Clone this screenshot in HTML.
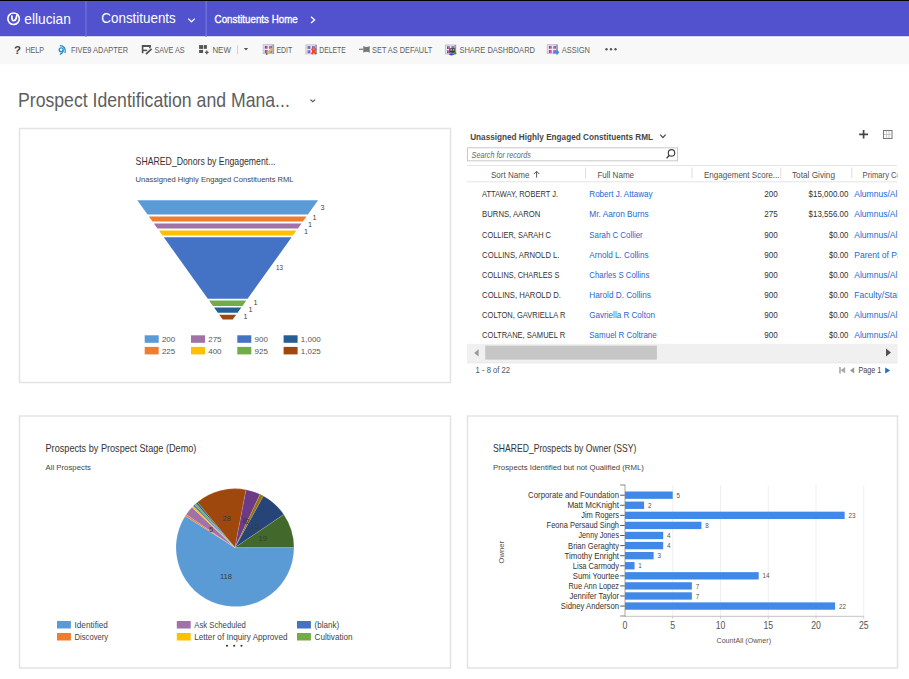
<!DOCTYPE html>
<html><head><meta charset="utf-8"><style>
html,body{margin:0;padding:0;background:#fff;width:909px;height:679px;overflow:hidden}
svg{display:block}
text{font-family:"Liberation Sans", sans-serif}
</style></head><body>
<svg width="909" height="679" viewBox="0 0 909 679">
<rect x="0" y="0" width="909" height="1" fill="#000"/>
<rect x="0" y="1" width="909" height="35.5" fill="#5252CE"/>
<rect x="0" y="36.5" width="909" height="1.3" fill="#FFFFFF"/>
<rect x="0" y="37.8" width="909" height="26.6" fill="#F8F8F8"/>
<circle cx="13.6" cy="18.75" r="5.75" fill="none" stroke="#fff" stroke-width="1.65"/>
<path d="M11.9 16.1 C11.6 19.4 12.5 20.7 13.8 20.7 C15.2 20.7 15.9 19.5 16.3 17.8 L17.2 14.6" fill="none" stroke="#fff" stroke-width="1.8" stroke-linecap="round"/>
<text x="24.3" y="23.6" font-size="15" fill="#fff" textLength="46.5" lengthAdjust="spacingAndGlyphs">ellucian</text>
<line x1="86" y1="1" x2="86" y2="36.5" stroke="#6A6BD6" stroke-width="1.7"/>
<text x="101.3" y="23.1" font-size="14.3" fill="#fff" textLength="74.5" lengthAdjust="spacingAndGlyphs">Constituents</text>
<path d="M188.2 18.6 L191.5 21.8 L194.8 18.6" fill="none" stroke="#fff" stroke-width="1.2"/>
<line x1="206.2" y1="1" x2="206.2" y2="36.5" stroke="#6A6BD6" stroke-width="1.7"/>
<text x="214.6" y="22.8" font-size="11.8" fill="#fff" textLength="83.2" lengthAdjust="spacingAndGlyphs" stroke="#fff" stroke-width="0.35">Constituents Home</text>
<path d="M311 16.8 L314.6 19.9 L311 23" fill="none" stroke="#fff" stroke-width="1.3"/>
<text x="14" y="53.8" font-size="11.5" fill="#444" textLength="7" lengthAdjust="spacingAndGlyphs" font-weight="bold">?</text>
<text x="25.5" y="53.4" font-size="8.9" fill="#5e5e5e" textLength="18.5" lengthAdjust="spacingAndGlyphs">HELP</text>
<text x="70.9" y="53.4" font-size="8.9" fill="#5e5e5e" textLength="57.2" lengthAdjust="spacingAndGlyphs">FIVE9 ADAPTER</text>
<text x="154.5" y="53.4" font-size="8.9" fill="#5e5e5e" textLength="30.2" lengthAdjust="spacingAndGlyphs">SAVE AS</text>
<text x="212.4" y="53.4" font-size="8.9" fill="#5e5e5e" textLength="18.5" lengthAdjust="spacingAndGlyphs">NEW</text>
<text x="276.4" y="53.4" font-size="8.9" fill="#5e5e5e" textLength="15.8" lengthAdjust="spacingAndGlyphs">EDIT</text>
<text x="319.3" y="53.4" font-size="8.9" fill="#5e5e5e" textLength="26.4" lengthAdjust="spacingAndGlyphs">DELETE</text>
<text x="372.1" y="53.4" font-size="8.9" fill="#5e5e5e" textLength="60.1" lengthAdjust="spacingAndGlyphs">SET AS DEFAULT</text>
<text x="459.4" y="53.4" font-size="8.9" fill="#5e5e5e" textLength="75.6" lengthAdjust="spacingAndGlyphs">SHARE DASHBOARD</text>
<text x="561.7" y="53.4" font-size="8.9" fill="#5e5e5e" textLength="28.3" lengthAdjust="spacingAndGlyphs">ASSIGN</text>
<circle cx="606.5" cy="49.3" r="1.2" fill="#555"/>
<circle cx="611" cy="49.3" r="1.2" fill="#555"/>
<circle cx="615.5" cy="49.3" r="1.2" fill="#555"/>
<circle cx="61.2" cy="49.8" r="1.95" fill="none" stroke="#2F8FCB" stroke-width="1.45"/>
<path d="M63.1 50.2 C62.9 52.3 61.6 53.8 59.8 54.5" fill="none" stroke="#2F8FCB" stroke-width="1.45"/>
<path d="M60.3 45.6 C63.6 45.6 65.8 48.4 65.2 52.5" fill="none" stroke="#2F8FCB" stroke-width="1.35" stroke-linecap="round"/>
<path d="M142.6 53.2 V45.7 H149.9 V48.2" fill="none" stroke="#4f4f4f" stroke-width="1.6"/>
<rect x="142" y="45" width="8.7" height="1.9" fill="#4f4f4f"/>
<path d="M142.2 50.4 H147.2" fill="none" stroke="#4f4f4f" stroke-width="1.5"/>
<path d="M146 54.2 L151.6 48.8" fill="none" stroke="#4f4f4f" stroke-width="1.7"/>
<rect x="199.1" y="45.1" width="4" height="3.8" fill="#555"/>
<rect x="203.8" y="45.1" width="3.1" height="3.7" fill="#555"/>
<rect x="199.1" y="49.9" width="4" height="3.1" fill="#555"/>
<path d="M206.8 50.6 v3.6 M205 52.4 h3.6" fill="none" stroke="#555" stroke-width="1.3"/>
<line x1="237.6" y1="45.5" x2="237.6" y2="54" stroke="#cfcfcf" stroke-width="1"/>
<path d="M243.8 48.1 h4.4 l-2.2 2.3 z" fill="#555"/>
<rect x="263.1" y="44.7" width="10.7" height="9" fill="#E4E8F0" stroke="#AAB2C2" stroke-width="0.7"/>
<rect x="272.5" y="44.7" width="1.3" height="9" fill="#8C94A6"/>
<rect x="264.8" y="45.9" width="1.2" height="2.8" fill="#3D5FD6"/>
<rect x="266.0" y="45.9" width="1.6" height="2.8" fill="#D2458E"/>
<rect x="269.3" y="45.9" width="1.2" height="2.8" fill="#3D5FD6"/>
<rect x="270.5" y="45.9" width="1.6" height="2.8" fill="#D2458E"/>
<rect x="264.8" y="50.1" width="1.2" height="2.8" fill="#3D5FD6"/>
<rect x="266.0" y="50.1" width="1.6" height="2.8" fill="#D2458E"/>
<rect x="269.3" y="50.1" width="1.2" height="2.8" fill="#3D5FD6"/>
<rect x="270.5" y="50.1" width="1.6" height="2.8" fill="#D2458E"/>
<path d="M266.6 54 L272.6 48.6" fill="none" stroke="#D8C040" stroke-width="2.2"/>
<path d="M266 54.6 L267.2 53.4" fill="none" stroke="#555" stroke-width="1.4"/>
<rect x="305.9" y="44.9" width="10.7" height="9" fill="#E4E8F0" stroke="#AAB2C2" stroke-width="0.7"/>
<rect x="315.29999999999995" y="44.9" width="1.3" height="9" fill="#8C94A6"/>
<rect x="307.6" y="46.1" width="1.2" height="2.8" fill="#3D5FD6"/>
<rect x="308.8" y="46.1" width="1.6" height="2.8" fill="#D2458E"/>
<rect x="312.1" y="46.1" width="1.2" height="2.8" fill="#3D5FD6"/>
<rect x="313.3" y="46.1" width="1.6" height="2.8" fill="#D2458E"/>
<rect x="307.6" y="50.3" width="1.2" height="2.8" fill="#3D5FD6"/>
<rect x="308.8" y="50.3" width="1.6" height="2.8" fill="#D2458E"/>
<rect x="312.1" y="50.3" width="1.2" height="2.8" fill="#3D5FD6"/>
<rect x="313.3" y="50.3" width="1.6" height="2.8" fill="#D2458E"/>
<path d="M311.6 48.6 L316.2 54.2 M316.2 48.6 L311.6 54.2" fill="none" stroke="#F04A22" stroke-width="1.9"/>
<path d="M359 49.3 H363.5" fill="none" stroke="#777" stroke-width="1.2"/>
<path d="M363.3 46 Q366.5 47.8 369.7 46 V52.7 Q366.5 50.9 363.3 52.7 Z" fill="#777"/>
<rect x="445.3" y="45" width="10.6" height="9" fill="#E4E8F0" stroke="#AAB2C2" stroke-width="0.7"/>
<rect x="454.6" y="45" width="1.3" height="9" fill="#8C94A6"/>
<rect x="447.0" y="46.2" width="1.2" height="2.8" fill="#3D5FD6"/>
<rect x="448.2" y="46.2" width="1.6" height="2.8" fill="#D2458E"/>
<rect x="451.5" y="46.2" width="1.2" height="2.8" fill="#3D5FD6"/>
<rect x="452.7" y="46.2" width="1.6" height="2.8" fill="#D2458E"/>
<rect x="447.0" y="50.4" width="1.2" height="2.8" fill="#3D5FD6"/>
<rect x="448.2" y="50.4" width="1.6" height="2.8" fill="#D2458E"/>
<rect x="451.5" y="50.4" width="1.2" height="2.8" fill="#3D5FD6"/>
<rect x="452.7" y="50.4" width="1.6" height="2.8" fill="#D2458E"/>
<rect x="449.3" y="48.3" width="5.8" height="4.3" fill="#3a3a3a"/>
<rect x="450.3" y="49.1" width="1.6" height="1.6" fill="#bbb"/>
<rect x="452.8" y="49.1" width="1.6" height="1.6" fill="#bbb"/>
<ellipse cx="451.5" cy="54.3" rx="2.5" ry="1.1" fill="#3548D8"/>
<circle cx="455" cy="53.2" r="1.3" fill="#3A9A3A"/>
<rect x="547.2" y="44.7" width="10.4" height="9" fill="#E4E8F0" stroke="#AAB2C2" stroke-width="0.7"/>
<rect x="556.3000000000001" y="44.7" width="1.3" height="9" fill="#8C94A6"/>
<rect x="548.9" y="45.9" width="1.2" height="2.8" fill="#3D5FD6"/>
<rect x="550.1" y="45.9" width="1.6" height="2.8" fill="#D2458E"/>
<rect x="553.4" y="45.9" width="1.2" height="2.8" fill="#3D5FD6"/>
<rect x="554.6" y="45.9" width="1.6" height="2.8" fill="#D2458E"/>
<rect x="548.9" y="50.1" width="1.2" height="2.8" fill="#3D5FD6"/>
<rect x="550.1" y="50.1" width="1.6" height="2.8" fill="#D2458E"/>
<rect x="553.4" y="50.1" width="1.2" height="2.8" fill="#3D5FD6"/>
<rect x="554.6" y="50.1" width="1.6" height="2.8" fill="#D2458E"/>
<path d="M553.3 51.2 H556.6 V49.2 L559.4 52.3 L556.6 55.4 V53.4 H553.3 Z" fill="#4C86E6"/>
<text x="18" y="106.6" font-size="20.3" fill="#5e5e5e" textLength="271.8" lengthAdjust="spacingAndGlyphs">Prospect Identification and Mana...</text>
<path d="M310.4 99.6 L312.8 101.8 L315.2 99.6" fill="none" stroke="#555" stroke-width="1.2"/>
<rect x="19.5" y="128.5" width="431" height="254" fill="none" stroke="#E3E3E3" stroke-width="1.5"/>
<rect x="19.5" y="416" width="431" height="252" fill="none" stroke="#E3E3E3" stroke-width="1.5"/>
<rect x="467.5" y="416" width="430" height="252" fill="none" stroke="#E3E3E3" stroke-width="1.5"/>
<text x="135.6" y="164.6" font-size="10.2" fill="#333" textLength="139.9" lengthAdjust="spacingAndGlyphs">SHARED_Donors by Engagement...</text>
<text x="135.6" y="182.2" font-size="7.6" fill="#444" textLength="158" lengthAdjust="spacingAndGlyphs">Unassigned Highly Engaged Constituents RML</text>
<path d="M137.30 200.3 L318.10 200.3 L307.86 214.6 L147.54 214.6 Z" fill="#5B9BD5"/>
<path d="M148.83 216.4 L306.57 216.4 L302.85 221.6 L152.55 221.6 Z" fill="#ED7D31"/>
<path d="M153.84 223.4 L301.56 223.4 L297.91 228.5 L157.49 228.5 Z" fill="#A072A8"/>
<path d="M158.99 230.6 L296.41 230.6 L292.83 235.6 L162.57 235.6 Z" fill="#FFC000"/>
<path d="M163.79 237.3 L291.61 237.3 L247.57 298.8 L207.83 298.8 Z" fill="#4472C4"/>
<path d="M209.11 300.6 L246.29 300.6 L242.49 305.9 L212.91 305.9 Z" fill="#70AD47"/>
<path d="M214.06 307.5 L241.34 307.5 L237.55 312.8 L217.85 312.8 Z" fill="#255E91"/>
<path d="M219.21 314.7 L236.19 314.7 L232.68 319.6 L222.72 319.6 Z" fill="#9E480E"/>
<text x="320.5" y="209.8" font-size="7.2" fill="#404040">3</text>
<text x="312.5" y="220.3" font-size="7.2" fill="#404040">1</text>
<text x="308" y="227.3" font-size="7.2" fill="#404040">1</text>
<text x="304" y="234.1" font-size="7.2" fill="#404040">1</text>
<text x="276" y="269.8" font-size="7.2" fill="#404040" textLength="7" lengthAdjust="spacingAndGlyphs">13</text>
<text x="253.5" y="304.8" font-size="7.2" fill="#404040">1</text>
<text x="248.5" y="311.8" font-size="7.2" fill="#404040">1</text>
<text x="243.5" y="318.8" font-size="7.2" fill="#404040">1</text>
<rect x="144.7" y="335.3" width="14" height="7.5" fill="#5B9BD5"/>
<text x="161.9" y="341.9" font-size="8" fill="#555">200</text>
<rect x="144.7" y="346.90000000000003" width="14" height="7.5" fill="#ED7D31"/>
<text x="161.9" y="353.5" font-size="8" fill="#555">225</text>
<rect x="191.0" y="335.3" width="14" height="7.5" fill="#A072A8"/>
<text x="208.2" y="341.9" font-size="8" fill="#555">275</text>
<rect x="191.0" y="346.90000000000003" width="14" height="7.5" fill="#FFC000"/>
<text x="208.2" y="353.5" font-size="8" fill="#555">400</text>
<rect x="237.3" y="335.3" width="14" height="7.5" fill="#4472C4"/>
<text x="254.5" y="341.9" font-size="8" fill="#555">900</text>
<rect x="237.3" y="346.90000000000003" width="14" height="7.5" fill="#70AD47"/>
<text x="254.5" y="353.5" font-size="8" fill="#555">925</text>
<rect x="283.6" y="335.3" width="14" height="7.5" fill="#255E91"/>
<text x="300.8" y="341.9" font-size="8" fill="#555">1,000</text>
<rect x="283.6" y="346.90000000000003" width="14" height="7.5" fill="#9E480E"/>
<text x="300.8" y="353.5" font-size="8" fill="#555">1,025</text>
<text x="470.2" y="140.4" font-size="9.2" fill="#474747" textLength="182.8" lengthAdjust="spacingAndGlyphs" font-weight="bold">Unassigned Highly Engaged Constituents RML</text>
<path d="M660.2 134.7 L662.9 137.6 L665.6 134.7" fill="none" stroke="#444" stroke-width="1.2"/>
<path d="M863.6 130 v8.6 M859.2 134.3 h8.8" fill="none" stroke="#444" stroke-width="1.7"/>
<rect x="883.5" y="130.5" width="8.5" height="8" fill="none" stroke="#777" stroke-width="1"/>
<path d="M886.5 131 v7 M889 131 v7 M884 134.5 h7.5" fill="none" stroke="#bbb" stroke-width="0.8"/>
<rect x="467.5" y="147.8" width="210" height="13" fill="#fff" stroke="#C8C8C8" stroke-width="1"/>
<text x="471.6" y="158.1" font-size="8.3" fill="#666" textLength="59.2" lengthAdjust="spacingAndGlyphs" font-style="italic">Search for records</text>
<circle cx="671.5" cy="152.9" r="3.2" fill="none" stroke="#444" stroke-width="1.2"/>
<path d="M669.3 155.3 L666.6 158.2" fill="none" stroke="#444" stroke-width="1.4"/>
<rect x="467" y="165" width="430" height="1" fill="#E4E4E4"/>
<rect x="467" y="181.3" width="430" height="1" fill="#E4E4E4"/>
<rect x="585.1" y="167.6" width="1" height="10.6" fill="#DDDDDD"/>
<rect x="691.5" y="167.6" width="1" height="10.6" fill="#DDDDDD"/>
<rect x="780.3" y="167.6" width="1" height="10.6" fill="#DDDDDD"/>
<rect x="851.3" y="167.6" width="1" height="10.6" fill="#DDDDDD"/>
<text x="491" y="177.5" font-size="8.9" fill="#505050" textLength="38.5" lengthAdjust="spacingAndGlyphs">Sort Name</text>
<path d="M536.6 177.6 v-6.2 M533.8 174.1 L536.6 171.3 L539.4 174.1" fill="none" stroke="#555" stroke-width="1"/>
<text x="597.4" y="177.5" font-size="8.9" fill="#505050" textLength="36.7" lengthAdjust="spacingAndGlyphs">Full Name</text>
<text x="704" y="177.5" font-size="8.9" fill="#505050" textLength="75.5" lengthAdjust="spacingAndGlyphs">Engagement Score...</text>
<text x="792" y="177.5" font-size="8.9" fill="#505050" textLength="43" lengthAdjust="spacingAndGlyphs">Total Giving</text>
<clipPath id="gc"><rect x="467" y="160" width="430.5" height="220"/></clipPath>
<g clip-path="url(#gc)">
<text x="862.6" y="177.5" font-size="8.9" fill="#505050" textLength="67.2" lengthAdjust="spacingAndGlyphs">Primary Constituent</text>
<text x="482.1" y="197.2" font-size="9.9" fill="#333" textLength="75.9" lengthAdjust="spacingAndGlyphs">ATTAWAY, ROBERT J.</text>
<text x="589.3" y="197.2" font-size="9.9" fill="#2368D2" textLength="63.3" lengthAdjust="spacingAndGlyphs">Robert J. Attaway</text>
<text x="764.2" y="197.2" font-size="9.9" fill="#333" textLength="13.5" lengthAdjust="spacingAndGlyphs">200</text>
<text x="808.6" y="197.2" font-size="9.9" fill="#333" textLength="39.8" lengthAdjust="spacingAndGlyphs">$15,000.00</text>
<text x="854.3" y="197.2" font-size="9.9" fill="#2368D2" textLength="64.4" lengthAdjust="spacingAndGlyphs">Alumnus/Alumna</text>
<text x="482.1" y="217.37" font-size="9.9" fill="#333" textLength="58.3" lengthAdjust="spacingAndGlyphs">BURNS, AARON</text>
<text x="589.3" y="217.37" font-size="9.9" fill="#2368D2" textLength="59.4" lengthAdjust="spacingAndGlyphs">Mr. Aaron Burns</text>
<text x="764.2" y="217.37" font-size="9.9" fill="#333" textLength="13.5" lengthAdjust="spacingAndGlyphs">275</text>
<text x="808.6" y="217.37" font-size="9.9" fill="#333" textLength="39.8" lengthAdjust="spacingAndGlyphs">$13,556.00</text>
<text x="854.3" y="217.37" font-size="9.9" fill="#2368D2" textLength="64.4" lengthAdjust="spacingAndGlyphs">Alumnus/Alumna</text>
<text x="482.1" y="237.54" font-size="9.9" fill="#333" textLength="68.9" lengthAdjust="spacingAndGlyphs">COLLIER, SARAH C</text>
<text x="589.3" y="237.54" font-size="9.9" fill="#2368D2" textLength="53.4" lengthAdjust="spacingAndGlyphs">Sarah C Collier</text>
<text x="764.2" y="237.54" font-size="9.9" fill="#333" textLength="13.5" lengthAdjust="spacingAndGlyphs">900</text>
<text x="829.0" y="237.54" font-size="9.9" fill="#333" textLength="19.4" lengthAdjust="spacingAndGlyphs">$0.00</text>
<text x="854.3" y="237.54" font-size="9.9" fill="#2368D2" textLength="64.4" lengthAdjust="spacingAndGlyphs">Alumnus/Alumna</text>
<text x="482.1" y="257.71" font-size="9.9" fill="#333" textLength="77.4" lengthAdjust="spacingAndGlyphs">COLLINS, ARNOLD L.</text>
<text x="589.3" y="257.71" font-size="9.9" fill="#2368D2" textLength="59.2" lengthAdjust="spacingAndGlyphs">Arnold L. Collins</text>
<text x="764.2" y="257.71" font-size="9.9" fill="#333" textLength="13.5" lengthAdjust="spacingAndGlyphs">900</text>
<text x="829.0" y="257.71" font-size="9.9" fill="#333" textLength="19.4" lengthAdjust="spacingAndGlyphs">$0.00</text>
<text x="854.3" y="257.71" font-size="9.9" fill="#2368D2" textLength="54.0" lengthAdjust="spacingAndGlyphs">Parent of Past</text>
<text x="482.1" y="277.88" font-size="9.9" fill="#333" textLength="77.4" lengthAdjust="spacingAndGlyphs">COLLINS, CHARLES S</text>
<text x="589.3" y="277.88" font-size="9.9" fill="#2368D2" textLength="60" lengthAdjust="spacingAndGlyphs">Charles S Collins</text>
<text x="764.2" y="277.88" font-size="9.9" fill="#333" textLength="13.5" lengthAdjust="spacingAndGlyphs">900</text>
<text x="829.0" y="277.88" font-size="9.9" fill="#333" textLength="19.4" lengthAdjust="spacingAndGlyphs">$0.00</text>
<text x="854.3" y="277.88" font-size="9.9" fill="#2368D2" textLength="64.4" lengthAdjust="spacingAndGlyphs">Alumnus/Alumna</text>
<text x="482.1" y="298.05" font-size="9.9" fill="#333" textLength="78.9" lengthAdjust="spacingAndGlyphs">COLLINS, HAROLD D.</text>
<text x="589.3" y="298.05" font-size="9.9" fill="#2368D2" textLength="61.5" lengthAdjust="spacingAndGlyphs">Harold D. Collins</text>
<text x="764.2" y="298.05" font-size="9.9" fill="#333" textLength="13.5" lengthAdjust="spacingAndGlyphs">900</text>
<text x="829.0" y="298.05" font-size="9.9" fill="#333" textLength="19.4" lengthAdjust="spacingAndGlyphs">$0.00</text>
<text x="854.3" y="298.05" font-size="9.9" fill="#2368D2" textLength="47.2" lengthAdjust="spacingAndGlyphs">Faculty/Staff</text>
<text x="482.1" y="318.22" font-size="9.9" fill="#333" textLength="83.3" lengthAdjust="spacingAndGlyphs">COLTON, GAVRIELLA R</text>
<text x="589.3" y="318.22" font-size="9.9" fill="#2368D2" textLength="65.6" lengthAdjust="spacingAndGlyphs">Gavriella R Colton</text>
<text x="764.2" y="318.22" font-size="9.9" fill="#333" textLength="13.5" lengthAdjust="spacingAndGlyphs">900</text>
<text x="829.0" y="318.22" font-size="9.9" fill="#333" textLength="19.4" lengthAdjust="spacingAndGlyphs">$0.00</text>
<text x="854.3" y="318.22" font-size="9.9" fill="#2368D2" textLength="64.4" lengthAdjust="spacingAndGlyphs">Alumnus/Alumna</text>
<text x="482.1" y="338.39" font-size="9.9" fill="#333" textLength="83" lengthAdjust="spacingAndGlyphs">COLTRANE, SAMUEL R</text>
<text x="589.3" y="338.39" font-size="9.9" fill="#2368D2" textLength="67.4" lengthAdjust="spacingAndGlyphs">Samuel R Coltrane</text>
<text x="764.2" y="338.39" font-size="9.9" fill="#333" textLength="13.5" lengthAdjust="spacingAndGlyphs">900</text>
<text x="829.0" y="338.39" font-size="9.9" fill="#333" textLength="19.4" lengthAdjust="spacingAndGlyphs">$0.00</text>
<text x="854.3" y="338.39" font-size="9.9" fill="#2368D2" textLength="64.4" lengthAdjust="spacingAndGlyphs">Alumnus/Alumna</text>
</g>
<rect x="467" y="343.8" width="430.5" height="18.5" fill="#F0F0F0"/>
<rect x="467" y="362.3" width="430.5" height="1" fill="#E4E4E4"/>
<rect x="485.2" y="345.6" width="171.7" height="14" fill="#C6C6C6"/>
<path d="M478.6 349.3 L474.2 353 L478.6 356.6 Z" fill="#9A9A9A"/>
<path d="M886 348.6 L891 352.6 L886 356.6 Z" fill="#505050"/>
<text x="475.6" y="372.8" font-size="8.9" fill="#555" textLength="34.5" lengthAdjust="spacingAndGlyphs">1 - 8 of 22</text>
<path d="M840 367 v6.6" fill="none" stroke="#a8a8a8" stroke-width="1.6"/>
<path d="M845.2 367 L840.6 370.3 L845.2 373.6 Z" fill="#a8a8a8"/>
<path d="M854.2 367.2 L850 370.4 L854.2 373.6 Z" fill="#999"/>
<text x="858.4" y="372.8" font-size="8.9" fill="#444" textLength="22.9" lengthAdjust="spacingAndGlyphs">Page 1</text>
<path d="M885.2 367.4 L890.2 370.5 L885.2 373.6 Z" fill="#1E6FC8"/>
<text x="45.5" y="452.3" font-size="10.2" fill="#333" textLength="150.9" lengthAdjust="spacingAndGlyphs">Prospects by Prospect Stage (Demo)</text>
<text x="45.5" y="469.8" font-size="7.6" fill="#444" textLength="45.5" lengthAdjust="spacingAndGlyphs">All Prospects</text>
<path d="M235 547.6 L294.00 547.60 A59 59 0 1 1 185.18 515.99 Z" fill="#5B9BD5" stroke="#fff" stroke-width="0.2" stroke-opacity="0.7"/>
<path d="M235 547.6 L185.18 515.99 A59 59 0 0 1 186.20 514.44 Z" fill="#ED7D31" stroke="#fff" stroke-width="0.2" stroke-opacity="0.7"/>
<path d="M235 547.6 L186.20 514.44 A59 59 0 0 1 191.99 507.21 Z" fill="#A072A8" stroke="#fff" stroke-width="0.2" stroke-opacity="0.7"/>
<path d="M235 547.6 L191.99 507.21 A59 59 0 0 1 193.28 505.88 Z" fill="#FFC000" stroke="#fff" stroke-width="0.2" stroke-opacity="0.7"/>
<path d="M235 547.6 L193.28 505.88 A59 59 0 0 1 194.61 504.59 Z" fill="#4472C4" stroke="#fff" stroke-width="0.2" stroke-opacity="0.7"/>
<path d="M235 547.6 L194.61 504.59 A59 59 0 0 1 195.98 503.34 Z" fill="#70AD47" stroke="#fff" stroke-width="0.2" stroke-opacity="0.7"/>
<path d="M235 547.6 L195.98 503.34 A59 59 0 0 1 197.39 502.14 Z" fill="#255E91" stroke="#fff" stroke-width="0.2" stroke-opacity="0.7"/>
<path d="M235 547.6 L197.39 502.14 A59 59 0 0 1 246.06 489.65 Z" fill="#9E480E" stroke="#fff" stroke-width="0.2" stroke-opacity="0.7"/>
<path d="M235 547.6 L246.06 489.65 A59 59 0 0 1 260.12 494.22 Z" fill="#6C3A87" stroke="#fff" stroke-width="0.2" stroke-opacity="0.7"/>
<path d="M235 547.6 L260.12 494.22 A59 59 0 0 1 263.42 495.90 Z" fill="#997300" stroke="#fff" stroke-width="0.2" stroke-opacity="0.7"/>
<path d="M235 547.6 L263.42 495.90 A59 59 0 0 1 283.80 514.44 Z" fill="#264478" stroke="#fff" stroke-width="0.2" stroke-opacity="0.7"/>
<path d="M235 547.6 L283.80 514.44 A59 59 0 0 1 294.00 547.60 Z" fill="#43682B" stroke="#fff" stroke-width="0.2" stroke-opacity="0.7"/>
<text x="220" y="579" font-size="7.5" fill="#3a3a3a">118</text>
<text x="222.5" y="521.3" font-size="7.5" fill="#3a3a3a">28</text>
<text x="242.5" y="522.7" font-size="7.5" fill="#3a3a3a">8</text>
<text x="250.8" y="528.5" font-size="7.5" fill="#3a3a3a">15</text>
<text x="245.8" y="524" font-size="7" fill="#3a3a3a">2</text>
<text x="258.5" y="541.4" font-size="7.5" fill="#3a3a3a">19</text>
<text x="209" y="531.5" font-size="7.5" fill="#3a3a3a">5</text>
<rect x="57" y="621.0" width="13.9" height="7.5" fill="#5B9BD5"/>
<text x="74.5" y="627.9" font-size="8.2" fill="#444" textLength="33.4" lengthAdjust="spacingAndGlyphs">Identified</text>
<rect x="57" y="633.0" width="13.9" height="7.5" fill="#ED7D31"/>
<text x="74.5" y="639.9" font-size="8.2" fill="#444" textLength="33.7" lengthAdjust="spacingAndGlyphs">Discovery</text>
<rect x="176.8" y="621.0" width="13.9" height="7.5" fill="#A072A8"/>
<text x="194.3" y="627.9" font-size="8.2" fill="#444" textLength="51.5" lengthAdjust="spacingAndGlyphs">Ask Scheduled</text>
<rect x="176.8" y="633.0" width="13.9" height="7.5" fill="#FFC000"/>
<text x="194.3" y="639.9" font-size="8.2" fill="#444" textLength="93.2" lengthAdjust="spacingAndGlyphs">Letter of Inquiry Approved</text>
<rect x="297" y="621.0" width="13.9" height="7.5" fill="#4472C4"/>
<text x="314.5" y="627.9" font-size="8.2" fill="#444" textLength="24.7" lengthAdjust="spacingAndGlyphs">(blank)</text>
<rect x="297" y="633.0" width="13.9" height="7.5" fill="#70AD47"/>
<text x="314.5" y="639.9" font-size="8.2" fill="#444" textLength="38.1" lengthAdjust="spacingAndGlyphs">Cultivation</text>
<circle cx="227" cy="645.8" r="1.05" fill="#333"/>
<circle cx="234.2" cy="645.8" r="1.05" fill="#333"/>
<circle cx="241.5" cy="645.8" r="1.05" fill="#333"/>
<text x="493.1" y="451.6" font-size="10.2" fill="#333" textLength="143.3" lengthAdjust="spacingAndGlyphs">SHARED_Prospects by Owner (SSY)</text>
<text x="493.1" y="469.6" font-size="7.6" fill="#444" textLength="150.7" lengthAdjust="spacingAndGlyphs">Prospects Identified but not Qualified (RML)</text>
<rect x="672.25" y="485" width="1" height="131" fill="#EFEFEF"/>
<rect x="720.0" y="485" width="1" height="131" fill="#EFEFEF"/>
<rect x="767.75" y="485" width="1" height="131" fill="#EFEFEF"/>
<rect x="815.5" y="485" width="1" height="131" fill="#EFEFEF"/>
<rect x="863.25" y="485" width="1" height="131" fill="#EFEFEF"/>
<rect x="625" y="615.8" width="239" height="1.1" fill="#C8C8CE"/>
<rect x="672.25" y="616" width="1" height="2.6" fill="#C8C8CE"/>
<rect x="720.0" y="616" width="1" height="2.6" fill="#C8C8CE"/>
<rect x="767.75" y="616" width="1" height="2.6" fill="#C8C8CE"/>
<rect x="815.5" y="616" width="1" height="2.6" fill="#C8C8CE"/>
<rect x="863.25" y="616" width="1" height="2.6" fill="#C8C8CE"/>
<rect x="624.5" y="485" width="1" height="131.5" fill="#A8A8A8"/>
<rect x="620.2" y="484.5" width="5" height="1" fill="#888"/>
<rect x="620.2" y="615.5" width="5" height="1" fill="#888"/>
<rect x="625" y="491.5" width="47.75" height="7.35" fill="#4189E8"/>
<rect x="620.2" y="494.7" width="4.5" height="1" fill="#555"/>
<text x="528.1" y="498.1" font-size="8.2" fill="#333" textLength="90.9" lengthAdjust="spacingAndGlyphs">Corporate and Foundation</text>
<text x="676.55" y="497.8" font-size="6.8" fill="#555" textLength="3.5" lengthAdjust="spacingAndGlyphs">5</text>
<rect x="625" y="501.58" width="19.1" height="7.35" fill="#4189E8"/>
<rect x="620.2" y="504.78" width="4.5" height="1" fill="#555"/>
<text x="567.4" y="508.18" font-size="8.2" fill="#333" textLength="51.6" lengthAdjust="spacingAndGlyphs">Matt McKnight</text>
<text x="647.9" y="507.88" font-size="6.8" fill="#555" textLength="3.5" lengthAdjust="spacingAndGlyphs">2</text>
<rect x="625" y="511.66" width="219.65" height="7.35" fill="#4189E8"/>
<rect x="620.2" y="514.86" width="4.5" height="1" fill="#555"/>
<text x="581.2" y="518.26" font-size="8.2" fill="#333" textLength="37.8" lengthAdjust="spacingAndGlyphs">Jim Rogers</text>
<text x="848.45" y="517.96" font-size="6.8" fill="#555" textLength="7.0" lengthAdjust="spacingAndGlyphs">23</text>
<rect x="625" y="521.74" width="76.4" height="7.35" fill="#4189E8"/>
<rect x="620.2" y="524.94" width="4.5" height="1" fill="#555"/>
<text x="546.6" y="528.34" font-size="8.2" fill="#333" textLength="72.4" lengthAdjust="spacingAndGlyphs">Feona Persaud Singh</text>
<text x="705.2" y="528.04" font-size="6.8" fill="#555" textLength="3.5" lengthAdjust="spacingAndGlyphs">8</text>
<rect x="625" y="531.82" width="38.2" height="7.35" fill="#4189E8"/>
<rect x="620.2" y="535.02" width="4.5" height="1" fill="#555"/>
<text x="578.5" y="538.42" font-size="8.2" fill="#333" textLength="40.5" lengthAdjust="spacingAndGlyphs">Jenny Jones</text>
<text x="667.0" y="538.12" font-size="6.8" fill="#555" textLength="3.5" lengthAdjust="spacingAndGlyphs">4</text>
<rect x="625" y="541.9" width="38.2" height="7.35" fill="#4189E8"/>
<rect x="620.2" y="545.1" width="4.5" height="1" fill="#555"/>
<text x="568.1" y="548.5" font-size="8.2" fill="#333" textLength="50.9" lengthAdjust="spacingAndGlyphs">Brian Geraghty</text>
<text x="667.0" y="548.2" font-size="6.8" fill="#555" textLength="3.5" lengthAdjust="spacingAndGlyphs">4</text>
<rect x="625" y="551.98" width="28.65" height="7.35" fill="#4189E8"/>
<rect x="620.2" y="555.18" width="4.5" height="1" fill="#555"/>
<text x="564.6" y="558.58" font-size="8.2" fill="#333" textLength="54.4" lengthAdjust="spacingAndGlyphs">Timothy Enright</text>
<text x="657.45" y="558.28" font-size="6.8" fill="#555" textLength="3.5" lengthAdjust="spacingAndGlyphs">3</text>
<rect x="625" y="562.06" width="9.55" height="7.35" fill="#4189E8"/>
<rect x="620.2" y="565.26" width="4.5" height="1" fill="#555"/>
<text x="572.8" y="568.66" font-size="8.2" fill="#333" textLength="46.2" lengthAdjust="spacingAndGlyphs">Lisa Carmody</text>
<text x="638.35" y="568.36" font-size="6.8" fill="#555" textLength="3.5" lengthAdjust="spacingAndGlyphs">1</text>
<rect x="625" y="572.14" width="133.7" height="7.35" fill="#4189E8"/>
<rect x="620.2" y="575.34" width="4.5" height="1" fill="#555"/>
<text x="572.8" y="578.74" font-size="8.2" fill="#333" textLength="46.2" lengthAdjust="spacingAndGlyphs">Sumi Yourtee</text>
<text x="762.5" y="578.44" font-size="6.8" fill="#555" textLength="7.0" lengthAdjust="spacingAndGlyphs">14</text>
<rect x="625" y="582.22" width="66.85" height="7.35" fill="#4189E8"/>
<rect x="620.2" y="585.42" width="4.5" height="1" fill="#555"/>
<text x="568.5" y="588.82" font-size="8.2" fill="#333" textLength="50.5" lengthAdjust="spacingAndGlyphs">Rue Ann Lopez</text>
<text x="695.65" y="588.52" font-size="6.8" fill="#555" textLength="3.5" lengthAdjust="spacingAndGlyphs">7</text>
<rect x="625" y="592.3" width="66.85" height="7.35" fill="#4189E8"/>
<rect x="620.2" y="595.5" width="4.5" height="1" fill="#555"/>
<text x="569.4" y="598.9" font-size="8.2" fill="#333" textLength="49.6" lengthAdjust="spacingAndGlyphs">Jennifer Taylor</text>
<text x="695.65" y="598.6" font-size="6.8" fill="#555" textLength="3.5" lengthAdjust="spacingAndGlyphs">7</text>
<rect x="625" y="602.38" width="210.1" height="7.35" fill="#4189E8"/>
<rect x="620.2" y="605.58" width="4.5" height="1" fill="#555"/>
<text x="560.8" y="608.98" font-size="8.2" fill="#333" textLength="58.2" lengthAdjust="spacingAndGlyphs">Sidney Anderson</text>
<text x="838.9" y="608.68" font-size="6.8" fill="#555" textLength="7.0" lengthAdjust="spacingAndGlyphs">22</text>
<text x="622.55" y="628.7" font-size="10.3" fill="#555" textLength="4.9" lengthAdjust="spacingAndGlyphs">0</text>
<text x="670.3" y="628.7" font-size="10.3" fill="#555" textLength="4.9" lengthAdjust="spacingAndGlyphs">5</text>
<text x="715.65" y="628.7" font-size="10.3" fill="#555" textLength="9.7" lengthAdjust="spacingAndGlyphs">10</text>
<text x="763.4" y="628.7" font-size="10.3" fill="#555" textLength="9.7" lengthAdjust="spacingAndGlyphs">15</text>
<text x="811.15" y="628.7" font-size="10.3" fill="#555" textLength="9.7" lengthAdjust="spacingAndGlyphs">20</text>
<text x="858.9" y="628.7" font-size="10.3" fill="#555" textLength="9.7" lengthAdjust="spacingAndGlyphs">25</text>
<text x="716.5" y="643.4" font-size="7.8" fill="#555" textLength="54.5" lengthAdjust="spacingAndGlyphs">CountAll (Owner)</text>
<text x="0" y="0" font-size="7.6" fill="#555" text-anchor="middle" transform="translate(504.3 552.2) rotate(-90)">Owner</text>
</svg>
</body></html>
